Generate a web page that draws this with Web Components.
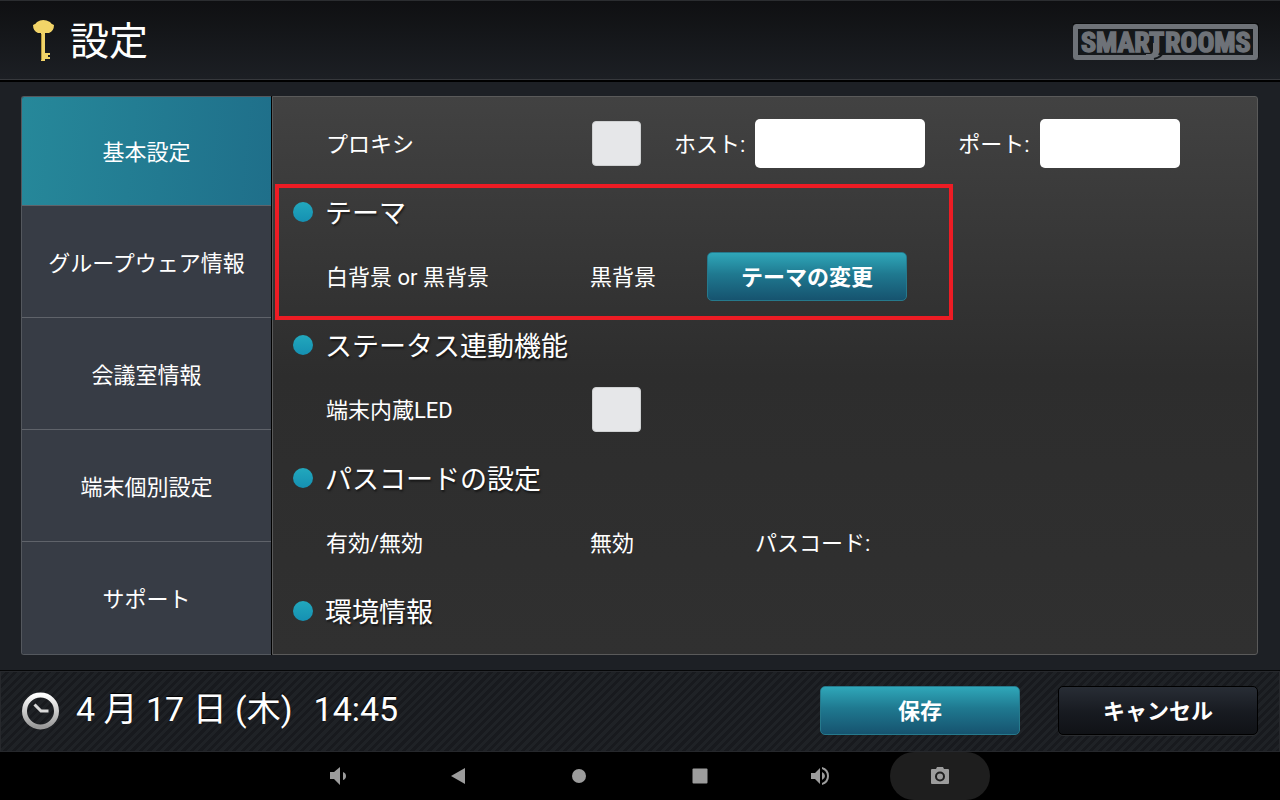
<!DOCTYPE html>
<html lang="ja">
<head>
<meta charset="utf-8">
<meta name="viewport" content="width=device-width, initial-scale=1">
<title>設定 - SMARTROOMS</title>
<style>
  body {
    margin: 0;
    background: #1d2025;
    color: #fff;
    font-family: Roboto, "Noto Sans CJK JP", sans-serif;
  }
</style>
</head>
<body>
<settings-app></settings-app>

<script>
  // Attach an open shadow root and fill it from a template string
  function render(host, html) {
    const template = document.createElement('template');
    template.innerHTML = html;
    host.attachShadow({ mode: 'open' }).appendChild(template.content.cloneNode(true));
  }

  class SmartLogo extends HTMLElement {
    constructor() {
      super();
      render(this, `
        <style>
          :host { display: block; }
          svg { display: block; }
          text {
            font: bold 28px "Roboto Condensed", Roboto, sans-serif;
            fill: #6e7278;
            stroke: #6e7278;
            stroke-width: 1.5;
          }
        </style>
        <svg width="186" height="38" viewBox="0 0 186 38" role="img" aria-label="SMARTROOMS">
          <rect x="2.5" y="2.5" width="180" height="31" rx="1" fill="none" stroke="#000" stroke-width="7" opacity=".5"/>
          <rect x="2.5" y="3.5" width="180" height="31" rx="1" fill="#14171a" stroke="#6e7278" stroke-width="5"/>
          <path d="M80 20h6v8q0 6-5 7h-8v-4h4q3 0 3-4z" fill="#6e7278"/>
          <path d="M81 36q8-2 10-8" fill="none" stroke="#14171a" stroke-width="2"/>
          <text x="8" y="29">SMART</text>
          <text x="92" y="29">ROOMS</text>
        </svg>
      `);
    }
  }

  class AppHeader extends HTMLElement {
    constructor() {
      super();
      render(this, `
        <style>
          :host {
            display: flex;
            align-items: center;
            justify-content: space-between;
            height: 75px;
            padding: 3px 21px 0 32px;
            border-top: 1px solid #2b2d30;
            border-bottom: 1px solid #36383c;
            box-shadow: 0 2px 0 #000;
            background: linear-gradient(#0f1012, #1c1f24);
          }
          .title { display: flex; align-items: center; gap: 15px; }
          h1 { margin: 0; font-size: 39px; line-height: 56px; font-weight: 400; }
        </style>
        <div class="title">
          <svg width="23" height="44" viewBox="0 0 23 44" aria-hidden="true">
            <path d="M1 5Q4 4 5 2Q11 -2 18 2Q19 4 22 5Q22 11 17 13H13V33H18V35H16V37H18V39H13V41H9V13H6Q1 11 1 5Z" fill="#f2d468"/>
            <path d="M9.500 14v26" stroke="#b89a3e" fill="none"/>
          </svg>
          <h1><slot></slot></h1>
        </div>
        <smart-logo></smart-logo>
      `);
    }
  }

  class SideTab extends HTMLElement {
    constructor() {
      super();
      render(this, `
        <style>
          :host { display: flex; flex: 1 0 112px; }
          :host(:first-of-type) { flex-basis: 109px; }
          button {
            flex: 1;
            padding: 4px 0 0;
            border: 0;
            background: #373c45;
            color: inherit;
            font: inherit;
            font-size: 22px;
            line-height: 32px;
          }
          :host([selected]) button { background: linear-gradient(95deg, #26889a, #1f6f8a); }
          :host(:not(:last-of-type)) button { border-bottom: 1px solid #5f636a; }
        </style>
        <button type="button"><slot></slot></button>
      `);
    }
  }

  class SideNav extends HTMLElement {
    constructor() {
      super();
      render(this, `
        <style>
          :host { display: block; width: 250px; }
          nav {
            display: flex;
            flex-direction: column;
            box-sizing: border-box;
            height: 100%;
            overflow: hidden;
            border: 1px solid #54585e;
            border-right: 0;
            border-radius: 3px 0 0 3px;
          }
        </style>
        <nav><slot></slot></nav>
      `);
    }
  }

  class ActionButton extends HTMLElement {
    constructor() {
      super();
      render(this, `
        <style>
          :host { display: block; width: 200px; }
          button {
            box-sizing: border-box;
            width: 100%;
            height: 49px;
            padding: 2px 0 0;
            border: 1px solid #26798c;
            border-radius: 5px;
            background: linear-gradient(#2fa7b9, #1f7990 45%, #16536f);
            color: #fff;
            font: inherit;
            font-size: 22px;
            line-height: 32px;
            font-weight: 700;
          }
          :host([variant="dark"]) button {
            border-color: #000;
            background: linear-gradient(#282d35, #171a20 55%, #101216);
            box-shadow: 0 1px 0 #2b2d30;
          }
        </style>
        <button type="button"><slot></slot></button>
      `);
    }
  }

  class SettingSection extends HTMLElement {
    constructor() {
      super();
      render(this, `
        <style>
          :host { display: block; position: relative; }
          h2 {
            display: flex;
            align-items: center;
            gap: 12px;
            box-sizing: border-box;
            height: 68px;
            margin: 0;
            padding: 4px 0 0 20px;
            font-size: 27px;
            line-height: 40px;
            font-weight: 400;
            text-shadow: 1px 2px 2px #0008;
          }
          h2::before {
            content: "";
            width: 20px;
            height: 20px;
            border-radius: 50%;
            background: linear-gradient(#22a8bd, #1590b2);
          }
          h2 span { padding-top: 4px; }
          /* marker frame drawn over the section */
          :host([marked])::after {
            content: "";
            position: absolute;
            top: 8px;
            left: 2px;
            box-sizing: border-box;
            width: 678px;
            height: 136px;
            border: 4px solid #ed1c24;
            pointer-events: none;
          }
        </style>
        <h2><span><slot name="heading"></slot></span></h2>
        <slot></slot>
      `);
    }
  }

  class SettingRow extends HTMLElement {
    constructor() {
      super();
      render(this, `
        <style>
          :host {
            display: flex;
            align-items: center;
            height: 65px;
            padding-left: 53px;
            font-size: 22px;
            line-height: 32px;
          }
          .label { width: 264px; }
        </style>
        <div class="label"><slot name="label"></slot></div>
        <slot></slot>
      `);
    }
  }

  class SettingsPanel extends HTMLElement {
    constructor() {
      super();
      render(this, `
        <style>
          :host {
            display: block;
            flex: 1;
            box-sizing: border-box;
            min-width: 0;
            padding-top: 14px;
            overflow: hidden;
            border: 1px solid #5a5a5a;
            border-radius: 0 3px 3px 0;
            background: linear-gradient(#424242, #2d2d2d 50%, #303030);
          }
          setting-row > label, setting-row > span { display: block; padding-top: 3px; }
          input {
            box-sizing: border-box;
            margin: 0;
            border: 0;
            border-radius: 5px;
            background: #fff;
            font: inherit;
          }
          input[type="checkbox"] {
            appearance: none;
            width: 49px;
            height: 45px;
            margin: 0 33px 0 2px;
            border: 1px solid #cfd1d2;
            border-radius: 4px;
            background: #e6e7e9;
          }
          input[type="text"] { height: 49px; margin: 0 33px 0 10px; padding: 0 10px; }
          .host { width: 170px; }
          .port { width: 140px; }
          .theme { width: 117px; }
          .state { width: 165px; }
        </style>
        <setting-row>
          <label slot="label" for="proxy">プロキシ</label>
          <input id="proxy" type="checkbox">
          <label for="host">ホスト:</label>
          <input id="host" class="host" type="text">
          <label for="port">ポート:</label>
          <input id="port" class="port" type="text">
        </setting-row>
        <setting-section marked>
          <span slot="heading">テーマ</span>
          <setting-row>
            <span slot="label">白背景 or 黒背景</span>
            <span class="theme">黒背景</span>
            <action-button>テーマの変更</action-button>
          </setting-row>
        </setting-section>
        <setting-section>
          <span slot="heading">ステータス連動機能</span>
          <setting-row>
            <label slot="label" for="led">端末内蔵LED</label>
            <input id="led" type="checkbox">
          </setting-row>
        </setting-section>
        <setting-section>
          <span slot="heading">パスコードの設定</span>
          <setting-row>
            <span slot="label">有効/無効</span>
            <span class="state">無効</span>
            <span>パスコード:</span>
          </setting-row>
        </setting-section>
        <setting-section>
          <span slot="heading">環境情報</span>
        </setting-section>
      `);
    }
  }

  class AppFooter extends HTMLElement {
    constructor() {
      super();
      render(this, `
        <style>
          :host {
            display: flex;
            align-items: center;
            justify-content: space-between;
            box-sizing: border-box;
            height: 81px;
            padding: 0 21px 2px;
            border: 1px solid #26282c;
            box-shadow: 0 -1px 0 #060708;
            background: repeating-linear-gradient(135deg, #1f2226 0 3px, #181a1e 3px 6px);
          }
          .clock, .actions { display: flex; align-items: center; }
          .clock { gap: 16px; }
          .actions { gap: 38px; }
          time {
            display: flex;
            gap: 21px;
            padding-bottom: 4px;
            font-size: 34px;
            line-height: 48px;
            text-shadow: 0 -1px 1px #000;
          }
        </style>
        <div class="clock">
          <svg width="38" height="38" viewBox="0 0 38 38" fill="none" aria-hidden="true">
            <linearGradient id="ring" x1="0" y1="0" x2="0" y2="1">
              <stop offset="0" stop-color="#fff"/>
              <stop offset="1" stop-color="#999"/>
            </linearGradient>
            <circle cx="18.500" cy="19" r="16" stroke="url(#ring)" stroke-width="5"/>
            <path d="M12.500 12.500L19 19H26.500" stroke="#d8d8d8" stroke-width="3"/>
          </svg>
          <time datetime="04-17T14:45"><span>4 月 17 日 (木)</span><span>14:45</span></time>
        </div>
        <div class="actions">
          <action-button>保存</action-button>
          <action-button variant="dark">キャンセル</action-button>
        </div>
      `);
    }
  }

  class SystemBar extends HTMLElement {
    constructor() {
      super();
      render(this, `
        <style>
          :host {
            display: flex;
            justify-content: center;
            gap: 20px;
            height: 48px;
            background: #000;
          }
          button {
            display: flex;
            align-items: center;
            justify-content: center;
            width: 100px;
            padding: 0;
            border: 0;
            border-radius: 24px;
            background: none;
            color: #9c9c9c;
          }
          .active { background: #1e1e1e; }
          svg { display: block; fill: currentColor; }
        </style>
        <button type="button" aria-label="音量を下げる">
          <svg width="22" height="22" viewBox="0 0 22 22"><path d="M1 7v7h4l6 6V2L5 7zM14 7v8q3-1 3-4t-3-4z"/></svg>
        </button>
        <button type="button" aria-label="戻る">
          <svg width="22" height="22" viewBox="0 0 22 22"><path d="M2 11L16 3v16z"/></svg>
        </button>
        <button type="button" aria-label="ホーム">
          <svg width="22" height="22" viewBox="0 0 22 22"><circle cx="10" cy="11" r="7"/></svg>
        </button>
        <button type="button" aria-label="アプリ履歴">
          <svg width="22" height="22" viewBox="0 0 22 22"><rect x="3.500" y="3.500" width="15" height="15" rx="1"/></svg>
        </button>
        <button type="button" aria-label="音量を上げる">
          <svg width="22" height="22" viewBox="0 0 22 22"><path d="M2 8v6h4l5 5V3L6 8zM13 7v8q3-1.500 3-4t-3-4zM13 2v2q5 2 5 7t-5 7v2q7-2 7-9t-7-9z"/></svg>
        </button>
        <button type="button" class="active" aria-label="スクリーンショット">
          <svg width="22" height="22" viewBox="0 0 22 22"><path fill-rule="evenodd" d="M8 2h6l1 2h4q1 0 1 1v13q0 1-1 1H3q-1 0-1-1V5q0-1 1-1h4zM11 6.500a5 5 0 1 0 0 10a5 5 0 1 0 0-10zM11 8.500a3 3 0 1 1 0 6a3 3 0 1 1 0-6z"/></svg>
        </button>
      `);
    }
  }

  class SettingsApp extends HTMLElement {
    constructor() {
      super();
      render(this, `
        <style>
          :host { display: flex; flex-direction: column; min-height: 100vh; }
          main {
            display: flex;
            flex: 1;
            gap: 1px;
            padding: 16px 22px 16px 21px;
          }
          side-nav { box-shadow: 1px 0 0 #000; }
        </style>
        <app-header>設定</app-header>
        <main>
          <side-nav>
            <side-tab selected>基本設定</side-tab>
            <side-tab>グループウェア情報</side-tab>
            <side-tab>会議室情報</side-tab>
            <side-tab>端末個別設定</side-tab>
            <side-tab>サポート</side-tab>
          </side-nav>
          <settings-panel></settings-panel>
        </main>
        <app-footer></app-footer>
        <system-bar></system-bar>
      `);
    }
  }

  customElements.define('smart-logo', SmartLogo);
  customElements.define('app-header', AppHeader);
  customElements.define('side-tab', SideTab);
  customElements.define('side-nav', SideNav);
  customElements.define('action-button', ActionButton);
  customElements.define('setting-section', SettingSection);
  customElements.define('setting-row', SettingRow);
  customElements.define('settings-panel', SettingsPanel);
  customElements.define('app-footer', AppFooter);
  customElements.define('system-bar', SystemBar);
  customElements.define('settings-app', SettingsApp);
</script>
</body>
</html>
